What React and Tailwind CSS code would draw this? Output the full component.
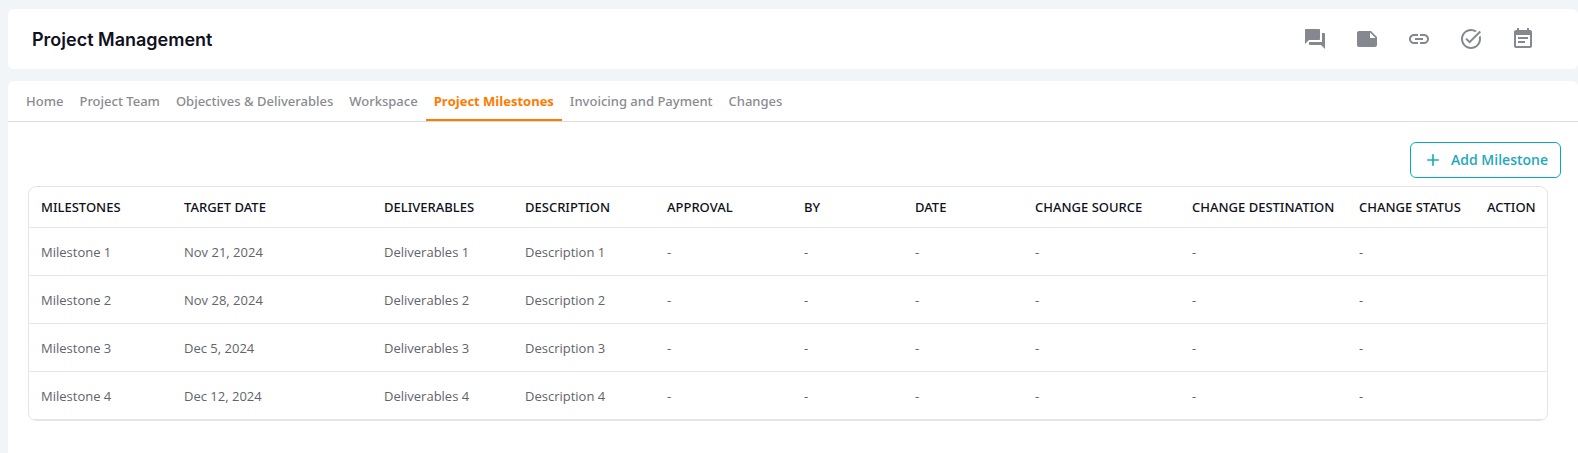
import React from 'react';
import { MdForum, MdNote, MdLink, MdTaskAlt, MdEventNote, MdAdd } from 'react-icons/md';

const actions = [
  { label: 'Discussions', icon: MdForum },
  { label: 'Notes', icon: MdNote },
  { label: 'Links', icon: MdLink },
  { label: 'Tasks', icon: MdTaskAlt },
  { label: 'Events', icon: MdEventNote },
];

const tabs = [
  'Home',
  'Project Team',
  'Objectives & Deliverables',
  'Workspace',
  'Project Milestones',
  'Invoicing and Payment',
  'Changes',
];

const columns = [
  { title: 'MILESTONES', width: 'w-[143px]' },
  { title: 'TARGET DATE', width: 'w-[200px]' },
  { title: 'DELIVERABLES', width: 'w-[141px]' },
  { title: 'DESCRIPTION', width: 'w-[142px]' },
  { title: 'APPROVAL', width: 'w-[137px]' },
  { title: 'BY', width: 'w-[111px]' },
  { title: 'DATE', width: 'w-[120px]' },
  { title: 'CHANGE SOURCE', width: 'w-[157px]' },
  { title: 'CHANGE DESTINATION', width: 'w-[167px]' },
  { title: 'CHANGE STATUS', width: 'w-[128px]' },
  { title: 'ACTION', width: 'w-[72px]' },
];

const rows = [
  ['Milestone 1', 'Nov 21, 2024', 'Deliverables 1', 'Description 1', '-', '-', '-', '-', '-', '-', ''],
  ['Milestone 2', 'Nov 28, 2024', 'Deliverables 2', 'Description 2', '-', '-', '-', '-', '-', '-', ''],
  ['Milestone 3', 'Dec 5, 2024', 'Deliverables 3', 'Description 3', '-', '-', '-', '-', '-', '-', ''],
  ['Milestone 4', 'Dec 12, 2024', 'Deliverables 4', 'Description 4', '-', '-', '-', '-', '-', '-', ''],
];

function Header() {
  return (
    <header className="flex h-15 items-center justify-between rounded-md bg-white pl-6 pr-[35px]">
      <h1 className="pt-[2px] font-['Inter',sans-serif] text-lg font-semibold text-[#0f1120]">Project Management</h1>
      <div className="flex gap-3">
        {actions.map(({ label, icon: Icon }) => (
          <button key={label} type="button" aria-label={label} className="p-2 text-[#868890]">
            <Icon className="size-6" />
          </button>
        ))}
      </div>
    </header>
  );
}

function Tabs() {
  return (
    <nav className="flex h-[41px] border-b border-[#dcdcde] pl-[10px]">
      {tabs.map((tab) => (
        <a
          key={tab}
          href="#"
          className={
            tab === 'Project Milestones'
              ? 'flex items-center border-b-2 border-[#ff7a00] px-2 pt-1 font-bold text-[#ff7a00]'
              : "flex items-center px-2 pt-[2px] font-['Noto_Sans',sans-serif] font-medium text-[#8a8b91]"
          }
        >
          {tab}
        </a>
      ))}
    </nav>
  );
}

function MilestoneTable() {
  return (
    <div className="ml-5 mr-[30px] mt-2 overflow-hidden rounded-lg border border-[#e5e5e7]">
      <table className="w-full table-fixed text-left">
        <thead>
          <tr className="h-10 border-b border-[#e5e5e7]">
            {columns.map((col) => (
              <th
                key={col.title}
                className={`${col.width} whitespace-nowrap px-3 pt-[2px] font-['Noto_Sans',sans-serif] font-medium text-[#0f1120]`}
              >
                {col.title}
              </th>
            ))}
          </tr>
        </thead>
        <tbody>
          {rows.map((row) => (
            <tr key={row[0]} className="h-12 border-b border-[#e5e5e7]">
              {row.map((cell, i) => (
                <td key={columns[i].title} className="px-3 pt-1 text-[#62646c]">
                  {cell}
                </td>
              ))}
            </tr>
          ))}
        </tbody>
      </table>
    </div>
  );
}

function App() {
  return (
    <div className="flex min-h-screen flex-col gap-3 bg-[#f1f5f8] pl-2 pt-[9px] font-['Open_Sans',sans-serif] text-[13px]">
      <Header />
      <main className="grow rounded-t-md bg-white">
        <Tabs />
        <div className="flex justify-end pr-[17px] pt-5">
          <button
            type="button"
            className="flex h-9 items-center gap-2 rounded-md border border-[#09a9bd] px-3 text-sm font-semibold text-[#1fa9bd]"
          >
            <MdAdd className="size-5" />
            Add Milestone
          </button>
        </div>
        <MilestoneTable />
      </main>
    </div>
  );
}

export default App;
